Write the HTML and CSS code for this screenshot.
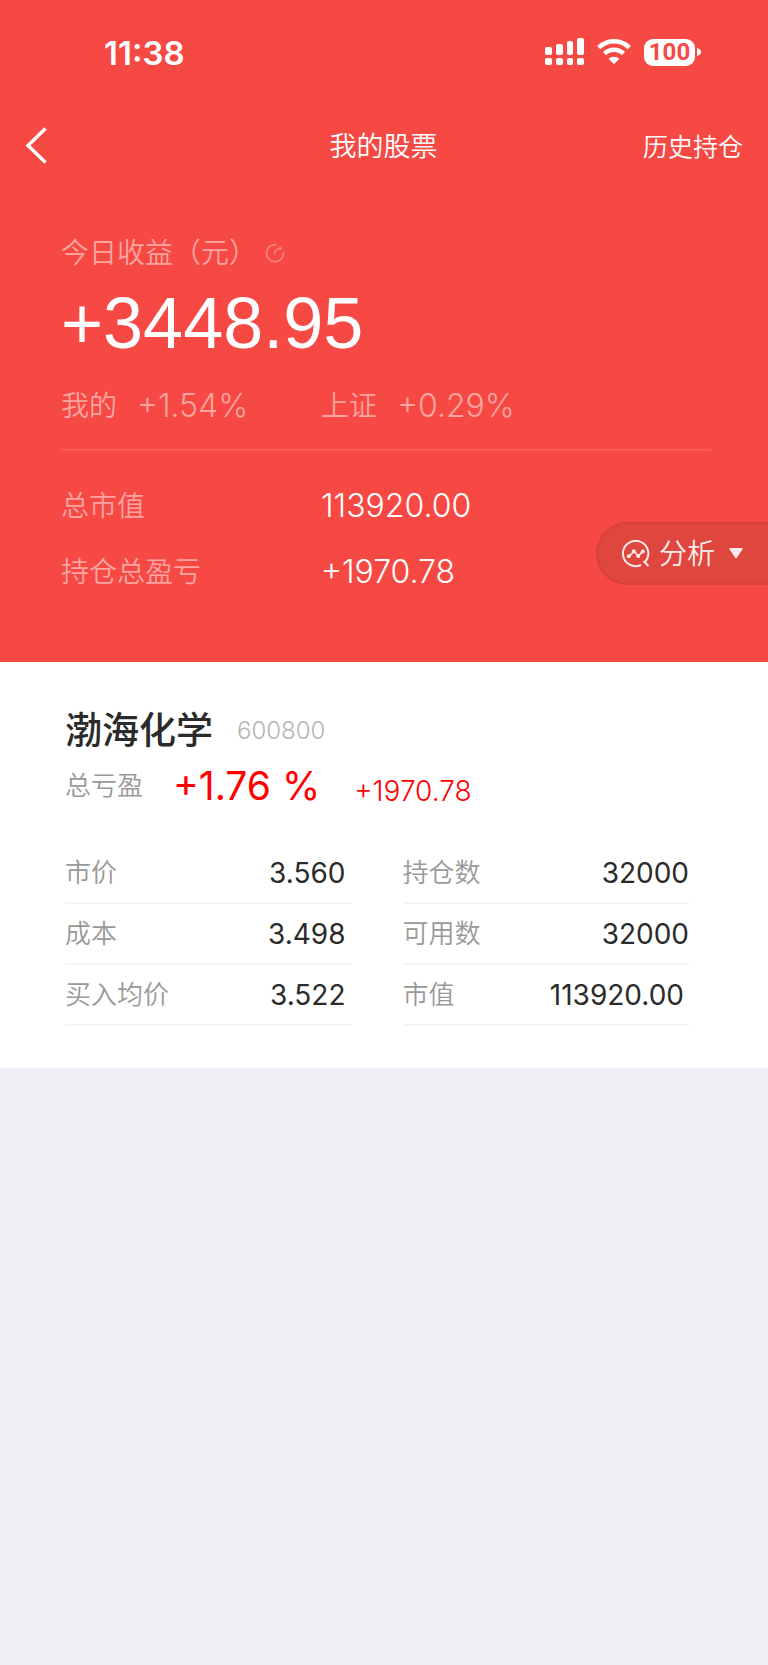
FILE: index.html
```html
<!DOCTYPE html>
<html lang="zh-CN">
<head>
<meta charset="utf-8">
<meta name="viewport" content="width=device-width, initial-scale=1">
<title>我的股票</title>
<link rel="stylesheet" href="styles.css">
</head>
<body>
<header class="hero">
  <div class="status">
    <time class="clock">11:38</time>
    <div class="status-icons">
      <svg class="signal" width="39" height="28" viewBox="0 0 39 28" fill="#fff" aria-hidden="true">
        <rect x="0" y="9" width="7" height="8" rx="2"/><rect x="11" y="6" width="7" height="11" rx="2"/><rect x="22" y="3" width="6" height="14" rx="2"/><rect x="32" y="0" width="7" height="17" rx="2"/>
        <rect x="0" y="20" width="7" height="7" rx="2"/><rect x="11" y="20" width="7" height="7" rx="2"/><rect x="22" y="20" width="6" height="7" rx="2"/><rect x="32" y="20" width="7" height="7" rx="2"/>
      </svg>
      <svg class="wifi" width="34" height="26" viewBox="0 0 34 26" aria-hidden="true">
        <g fill="none" stroke="#fff" stroke-width="4.6"><path d="M1.7 8.6a21.7 21.7 0 0 1 30.6 0"/><path d="M7.6 14.6a13.4 13.4 0 0 1 18.8 0"/></g>
        <path fill="#fff" d="M11.6 19.8a7.8 7.8 0 0 1 10.8 0L17 25.3z"/>
      </svg>
      <div class="battery"><span class="battery-level">100</span><svg width="5" height="10" viewBox="0 0 5 10" aria-hidden="true"><path fill="#fff" d="M1 1q4 1.200 4 4t-4 4z"/></svg></div>
    </div>
  </div>
  <nav class="nav">
    <button class="back" type="button" aria-label="返回"><svg width="24" height="38" viewBox="0 0 24 38" fill="none" stroke="#fff" stroke-width="3.400"><path d="M21.500 2.500 4 19.500l17.500 17"/></svg></button>
    <h1 class="title">我的股票</h1>
    <a class="history" href="#">历史持仓</a>
  </nav>
  <section class="summary">
    <div class="today"><span>今日收益（元）</span>
      <svg width="20" height="20" viewBox="0 0 20 20" fill="none" stroke="currentColor" stroke-width="1.700" aria-hidden="true"><path d="M11.500 1.700A8.500 8.500 0 1 0 18.400 9"/><path d="M9.500 11.500c0-4 2-6 6-6"/><path d="M14.500 2.800 17.500 5.500 14.500 8z" fill="currentColor" stroke="none"/></svg>
    </div>
    <p class="gain">+3448.95</p>
    <div class="rates">
      <p class="rate"><span>我的</span><span class="rate-value">+1.54%</span></p>
      <p class="rate"><span>上证</span><span class="rate-value">+0.29%</span></p>
    </div>
    <dl class="totals">
      <dt>总市值</dt><dd>113920.00</dd>
      <dt>持仓总盈亏</dt><dd>+1970.78</dd>
    </dl>
  </section>
  <button class="analyse" type="button">
    <svg width="30" height="30" viewBox="0 0 30 30" fill="none" stroke="currentColor" stroke-width="2" aria-hidden="true"><path d="M20 26A12.700 12.700 0 1 1 24.500 22.500"/><path d="M22.500 22l5 5"/><path d="M8 17.500 13 12.200 17.500 17 21.500 12.500" stroke-width="1.800"/><g fill="currentColor" stroke="none"><circle cx="7.800" cy="17.200" r="2"/><circle cx="12.800" cy="12.200" r="2"/><circle cx="17.200" cy="17" r="2"/><circle cx="21.800" cy="12.500" r="2"/></g></svg>
    <span>分析</span>
    <svg class="caret" width="14" height="11" viewBox="0 0 14 11" fill="currentColor" aria-hidden="true"><path d="M1 0h12q1.200.2.500 1.300L7.800 9.700q-.8 1-1.600 0L.5 1.300Q-.2.200 1 0z"/></svg>
  </button>
</header>
<main class="stock">
  <div class="stock-head"><h2 class="name">渤海化学</h2><span class="code">600800</span></div>
  <div class="profit"><span class="profit-label">总亏盈</span><span class="percent">+1.76 %</span><span class="amount">+1970.78</span></div>
  <div class="columns">
    <dl class="column column-price">
      <div class="row"><dt>市价</dt><dd>3.560</dd></div>
      <div class="row"><dt>成本</dt><dd>3.498</dd></div>
      <div class="row"><dt>买入均价</dt><dd>3.522</dd></div>
    </dl>
    <dl class="column">
      <div class="row"><dt>持仓数</dt><dd>32000</dd></div>
      <div class="row"><dt>可用数</dt><dd>32000</dd></div>
      <div class="row row-value"><dt>市值</dt><dd>113920.00</dd></div>
    </dl>
  </div>
</main>
</body>
</html>
```
FILE: styles.css
```css
* { box-sizing: border-box; }
body, h1, h2, p, dl, dd { margin: 0; }
body {
  background: #efeef4;
  font-family: Inter, "Noto Sans CJK SC", sans-serif;
  font-weight: 350;
  color: #2b2b2b;
}
button { border: 0; background: none; padding: 0; font: inherit; color: inherit; cursor: pointer; }
svg { display: block; flex: none; }

.hero {
  position: relative;
  background: #f64944;
  color: #fff;
  padding-bottom: 70px;
}
.status {
  display: flex;
  justify-content: space-between;
  align-items: center;
  height: 104px;
  padding: 0 67px 0 104px;
}
.clock { padding-top: 2px; font-size: 33px; line-height: 40px; font-weight: 600; }
.status-icons { display: flex; align-items: center; gap: 13px; }
.battery { display: flex; align-items: center; gap: 1px; }
.battery-level {
  width: 51px;
  border-radius: 9px;
  background: #fff;
  color: #f64944;
  font-family: Roboto, sans-serif;
  font-size: 24px;
  line-height: 27px;
  font-weight: 700;
  text-align: center;
}
.nav {
  display: grid;
  grid-template-columns: 1fr auto 1fr;
  align-items: center;
  height: 82px;
  padding: 0 25px 0 24px;
}
.title { padding-top: 3px; font-size: 27px; line-height: 40px; font-weight: 350; }
.history { padding-top: 3px; justify-self: end; color: inherit; text-decoration: none; font-size: 25px; line-height: 40px; }

.summary { padding: 47px 57px 0 61px; }
.today { display: flex; align-items: center; line-height: 40px; font-size: 28px; color: #fba4a1; }
.today svg { color: #f97f7b; margin-left: 8px; }
.gain {
  font-family: "Liberation Sans", Arial, sans-serif;
  font-weight: 400;
  font-size: 72px;
  line-height: 100px;
}
.rates {
  display: grid;
  grid-template-columns: 260px 1fr;
  border-bottom: 2px solid #f85a55;
  padding: 13px 0 23px;
  color: #fba4a1;
}
.rate { display: flex; align-items: center; gap: 20px; font-size: 28px; line-height: 40px; }
.rate-value { font-size: 32px; }
.totals {
  display: grid;
  grid-template-columns: 260px 1fr;
  align-items: center;
  row-gap: 26px;
  padding-top: 35px;
  line-height: 40px;
}
.totals dt { font-size: 28px; color: #fba4a1; }
.totals dd { font-size: 32px; }

.analyse {
  position: absolute;
  right: 0;
  bottom: 77px;
  display: flex;
  align-items: center;
  height: 63px;
  padding: 0 25px 0 23px;
  border: 2px solid #d93f3b;
  border-right: 0;
  border-radius: 32px 0 0 32px;
  background: #df463e;
  color: #fdecea;
  font-size: 28px;
  line-height: 40px;
}
.analyse span { margin: 0 14px 0 8px; }

.stock { background: #fff; padding: 44px 79px 42px 65px; }
.stock-head { display: flex; align-items: center; gap: 24px; line-height: 50px; }
.name { font-size: 37px; font-weight: 500; }
.code { font-size: 24px; color: #b5b5b5; }
.profit { display: flex; align-items: center; line-height: 60px; }
.profit-label { font-size: 26px; color: #999; }
.percent { margin: 0 34px 0 30px; font-size: 39px; font-weight: 400; color: #f00; }
.amount { padding-top: 10px; font-size: 28px; line-height: 50px; color: #f00; }
.columns { display: grid; grid-template-columns: 1fr 1fr; gap: 51px; margin-top: 27px; }
.row {
  display: flex;
  justify-content: space-between;
  align-items: center;
  height: 61px;
  line-height: 40px;
  border-bottom: 2px solid #f5f5f5;
}
.row dt { font-size: 26px; color: #999; }
.row dd { font-size: 28px; font-weight: 400; }
.column-price dd { padding-right: 6px; }
.row-value dd { padding-right: 5px; }
```
